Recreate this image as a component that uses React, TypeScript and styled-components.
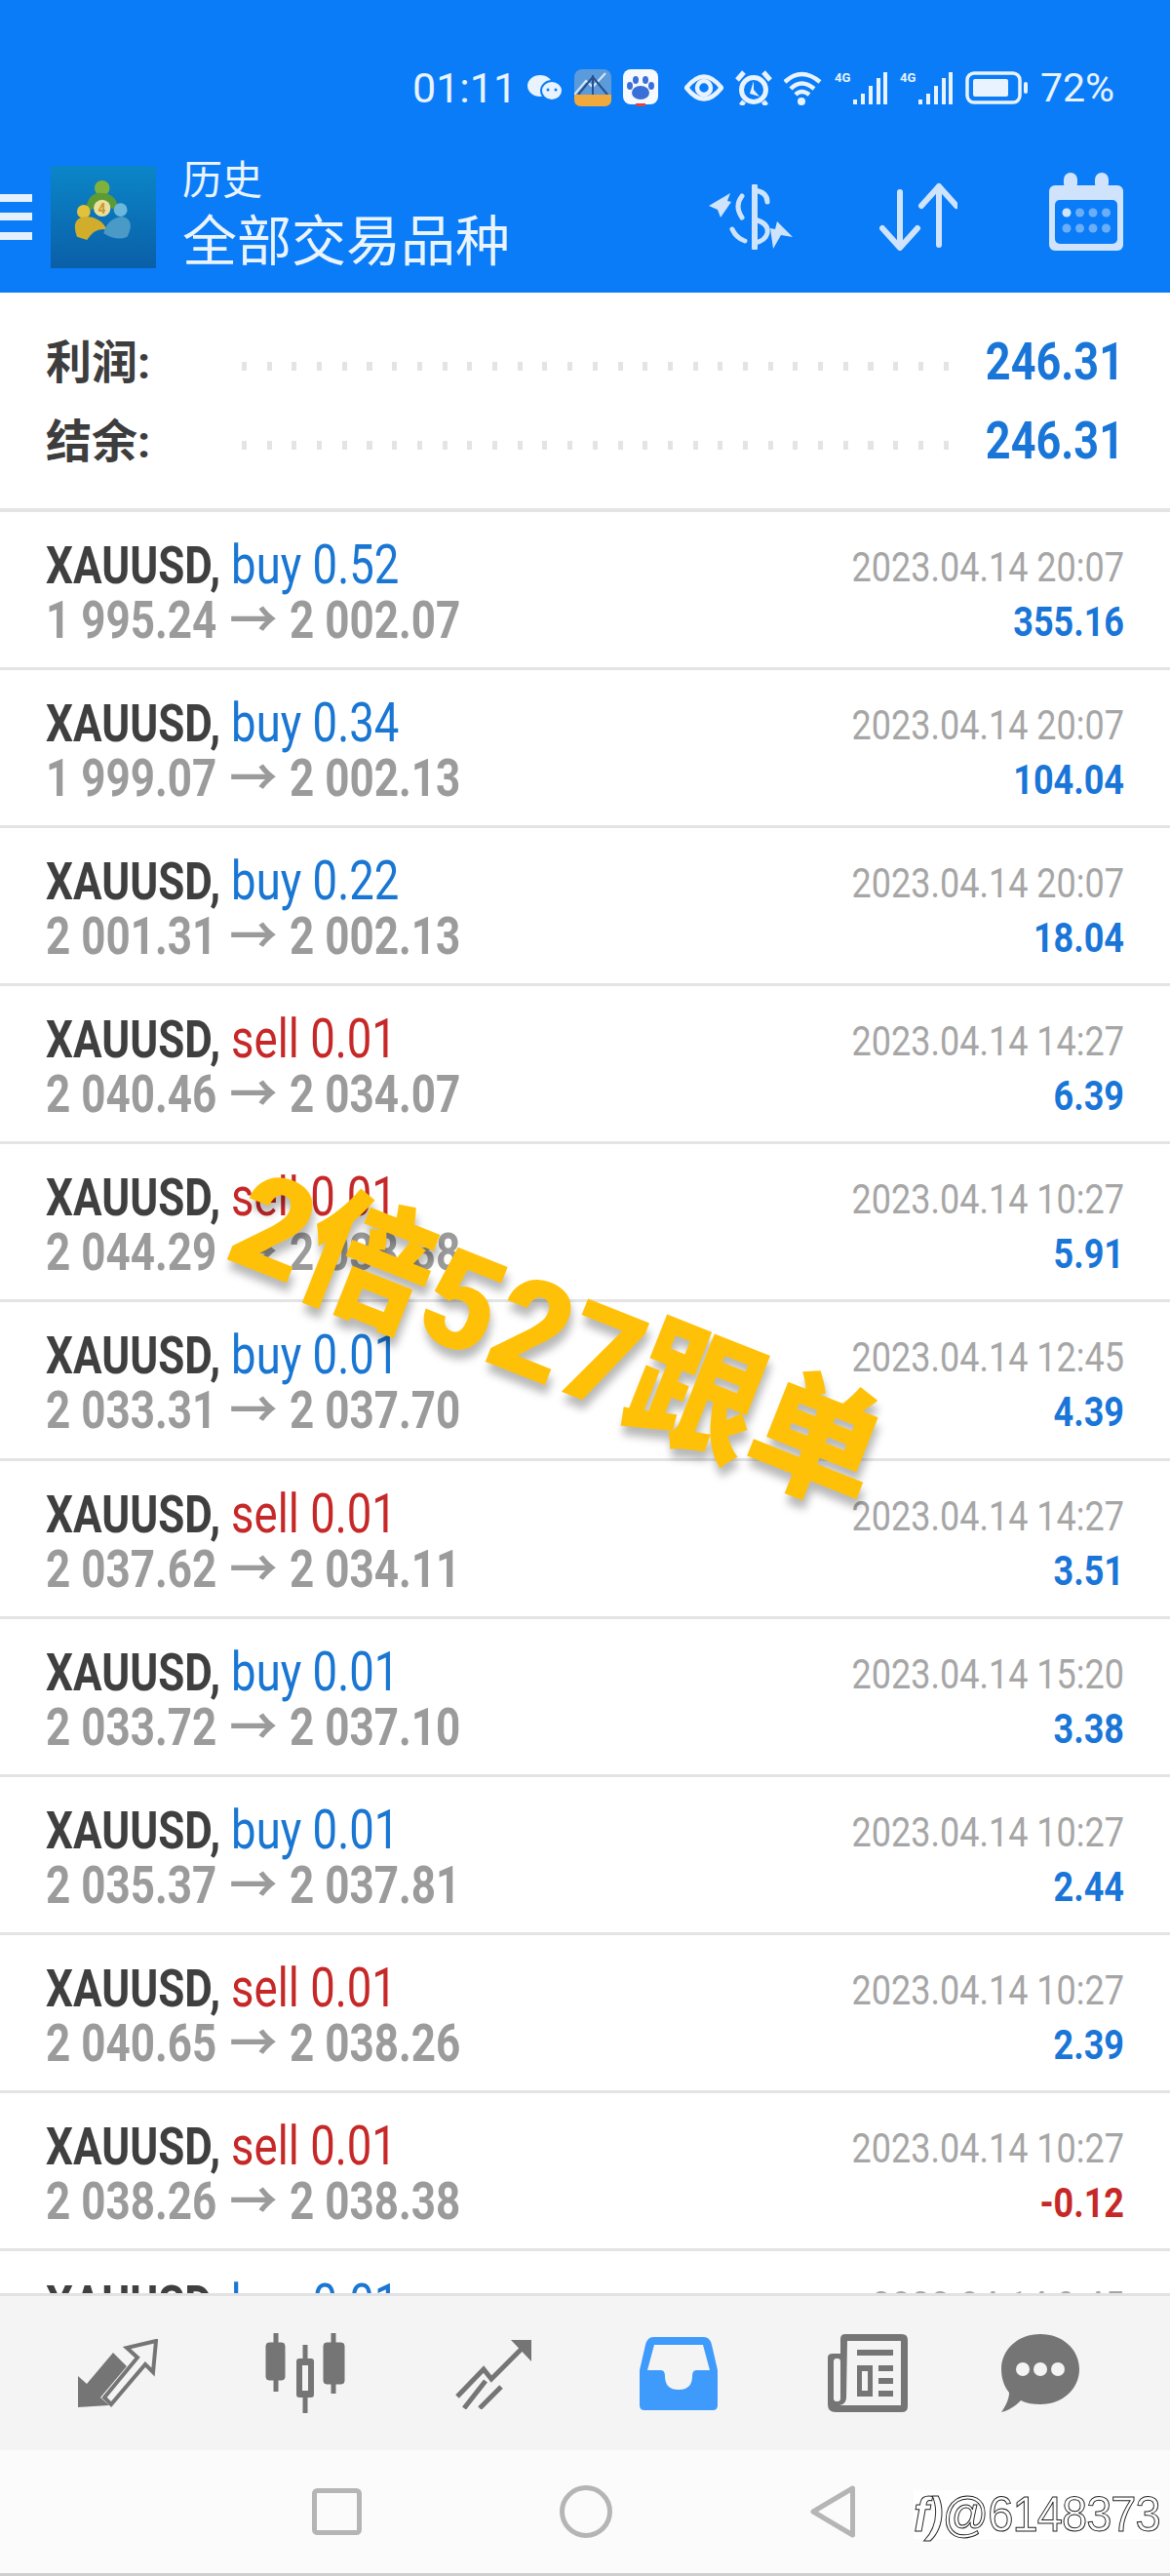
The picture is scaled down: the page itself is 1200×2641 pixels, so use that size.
import styled, { createGlobalStyle } from "styled-components";

const GlobalStyle = createGlobalStyle`
    html, body { margin: 0; padding: 0; background: #fff; }
    body { font-family: Roboto, "Noto Sans CJK SC", sans-serif; }
`

const Page = styled.div`
    position: relative;
    width: 1200px;
    height: 2641px;
    overflow: hidden;
    display: flex;
    flex-direction: column;
    background: #fff;
`

const Header = styled.header`
    flex: none;
    height: 300px;
    background: #0a7cf8;
    color: #eaf4ff;
    display: flex;
    flex-direction: column;
`
const StatusBar = styled.div`
    height: 150px;
    padding: 30px 61px 0 0;
    box-sizing: border-box;
    display: flex;
    align-items: center;
    justify-content: flex-end;
`
const Stretch = styled.span`
    display: inline-block;
    transform: scaleY(1.2);
    white-space: pre;
`
const StatusText = styled.span<{ $w: number }>`
    width: ${p => p.$w}px;
    font-size: ${p => (p.$w > 100 ? 43 : 41)}px;
    line-height: 44px;
    white-space: pre;
    color: #e8f3ff;
`
const StatusIcons = styled.div`
    display: flex;
    align-items: center;
    gap: 12px;
    margin: 0 13px 0 14px;
`
const Toolbar = styled.div`
    flex: 1;
    display: flex;
    align-items: center;
    padding-bottom: 6px;
`
const Burger = styled.div`
    width: 33px;
    height: 47px;
    margin: 0 19px 0 0;
    display: flex;
    flex-direction: column;
    justify-content: space-between;
    span { display: block; height: 8px; background: #e6f1ff; }
`
const Titles = styled.div`
    margin-left: 27px;
    width: 540px;
    display: flex;
    flex-direction: column;
    gap: 6px;
`
const SmallTitle = styled.div`
    font-size: 41px;
    line-height: 46px;
`
const BigTitle = styled.div`
    font-size: 56px;
    line-height: 68px;
`
const ToolIcons = styled.div`
    display: flex;
    align-items: center;
    gap: 89px;
    svg:last-child { margin: -10px 0 0 5px; }
`

const Summary = styled.section`
    flex: none;
    height: 225px;
    padding-top: 30px;
    box-sizing: border-box;
    border-bottom: 4px solid #e4e4e4;
`
const SummaryRow = styled.div`
    height: 81px;
    padding: 0 47px;
    display: flex;
    align-items: center;
`
const SummaryLabel = styled.div`
    width: 201px;
    margin-bottom: 6px;
    font-size: 47px;
    font-weight: 700;
    color: #3d3d3d;
`
const Dots = styled.div`
    width: 735px;
    height: 9px;
    margin-top: 10px;
    background: repeating-linear-gradient(90deg, #e4e4e4 0 5px, transparent 5px 25.7px);
`
const SummaryValue = styled(Stretch)`
    margin-left: auto;
    font-size: 45px;
    font-weight: 700;
    line-height: 44px;
    color: #1976d8;
`

const List = styled.div`
    flex: 1;
    overflow: hidden;
`
const Row = styled.div`
    height: 162.1px;
    box-sizing: border-box;
    padding: 27px 47px 0;
    border-bottom: 3px solid #e4e4e4;
    display: grid;
    grid-template-columns: 1fr auto;
    grid-template-rows: 56px 56px;
    align-items: center;
`
const Symbol = styled(Stretch)`
    font-size: 44px;
    line-height: 44px;
    font-weight: 700;
    color: #3f3f3f;
`
const Side = styled.span<{ $sell: boolean }>`
    font-size: 45.5px;
    font-weight: 400;
    color: ${p => (p.$sell ? "#c62828" : "#1976d2")};
`
const Prices = styled(Stretch)`
    font-size: 44px;
    line-height: 44px;
    font-weight: 700;
    color: #9b9b9b;
`
const Arrow = styled.span`
    display: inline-block;
    margin: 0 4.5px;
    transform: scaleX(1.12);
`
const DateText = styled(Stretch)`
    margin-top: 4px;
    font-size: 36px;
    line-height: 38px;
    text-align: right;
    color: #a6a6a6;
`
const Profit = styled(Stretch)<{ $negative: boolean }>`
    margin-top: 4px;
    font-size: 36px;
    line-height: 38px;
    font-weight: 700;
    text-align: right;
    color: ${p => (p.$negative ? "#c62828" : "#1976d8")};
`

const Stamp = styled.div`
    position: absolute;
    left: 245px;
    top: 1175px;
    font-size: 132px;
    line-height: 140px;
    font-weight: 900;
    white-space: nowrap;
    color: #ffc107;
    transform: rotate(21.6deg) scaleY(1.05);
    transform-origin: 0 50%;
    text-shadow: 5px 8px 8px rgba(0, 0, 0, 0.28);
`

const TabBar = styled.nav`
    flex: none;
    height: 161px;
    background: #f4f4f4;
    border-top: 3px solid #e2e2e2;
    box-sizing: border-box;
    padding-left: 80px;
    display: flex;
    align-items: center;
    gap: 110px;
    svg:nth-child(5) { margin-left: 3px; }
    svg:last-child { margin-left: -14px; }
`
const SystemBar = styled.div`
    flex: none;
    height: 129px;
    background: #fbfbfb;
    border-bottom: 3px solid #cfcfcf;
    box-sizing: border-box;
    padding-left: 320px;
    display: flex;
    align-items: center;
    gap: 203px;
`
const Handle = styled.div`
    position: absolute;
    right: 10px;
    bottom: 38px;
    font-size: 50px;
    line-height: 50px;
    color: #fff;
    font-family: "Liberation Sans", sans-serif;
    -webkit-text-stroke: 1px #222;
    background: #fff;
    letter-spacing: -1px;
    transform: scaleX(0.94);
    transform-origin: 100% 50%;
    em { font-style: italic; font-weight: 700; color: #fff; }
`

const Wechat = () => (
    <svg width="36" height="26" viewBox="0 0 36 26">
        <ellipse cx="13" cy="11" rx="13" ry="11" fill="#e8f3ff" />
        <ellipse cx="25" cy="16" rx="11" ry="10" fill="#e8f3ff" stroke="#0a7cf8" strokeWidth="2" />
        <circle cx="21" cy="15" r="1.5" fill="#0a7cf8" />
        <circle cx="29" cy="15" r="1.5" fill="#0a7cf8" />
    </svg>
)
const AppBadge = () => (
    <svg width="38" height="38" viewBox="0 0 38 38">
        <rect width="38" height="38" rx="8" fill="#5b9bdc" />
        <path d="M0 26 L12 12 L19 18 L32 4" stroke="#d6e8fa" strokeWidth="2" fill="none" />
        <path d="M19 6 L19 26 M19 8 L4 26 M19 8 L34 26" stroke="#2a4f8f" strokeWidth="2" fill="none" />
        <path d="M0 26 H38 V31 Q38 38 31 38 H7 Q0 38 0 31 Z" fill="#efa93c" />
    </svg>
)
const BaiduBadge = () => (
    <svg width="36" height="38" viewBox="0 0 36 38">
        <rect width="36" height="36" rx="8" fill="#f6faff" />
        <ellipse cx="18" cy="24" rx="9" ry="7" fill="#3b6fd8" />
        <ellipse cx="13" cy="11" rx="3" ry="4" fill="#3b6fd8" />
        <ellipse cx="23" cy="11" rx="3" ry="4" fill="#3b6fd8" />
        <ellipse cx="7" cy="17" rx="3" ry="4" fill="#3b6fd8" />
        <ellipse cx="29" cy="17" rx="3" ry="4" fill="#3b6fd8" />
        <rect x="13" y="35" width="10" height="3" fill="#d8434a" />
    </svg>
)
const Eye = () => (
    <svg width="40" height="28" viewBox="0 0 40 28" style={{ marginLeft: 15 }}>
        <path d="M2 14 Q20 -9 38 14 Q20 37 2 14 Z" fill="none" stroke="#e8f3ff" strokeWidth="4.5" />
        <circle cx="20" cy="14" r="7" fill="none" stroke="#e8f3ff" strokeWidth="4.5" />
    </svg>
)
const Alarm = () => (
    <svg width="38" height="36" viewBox="0 0 38 36">
        <circle cx="19" cy="20" r="12.5" fill="none" stroke="#e8f3ff" strokeWidth="5" />
        <path d="M19 11 V20 L25 27 L15 24 Z" fill="#e8f3ff" />
        <path d="M2 10 L9 2 M36 10 L29 2 M9 32 L6 36 M29 32 L32 36" stroke="#e8f3ff" strokeWidth="5" />
    </svg>
)
const Wifi = () => (
    <svg width="40" height="36" viewBox="0 0 40 36" fill="none" stroke="#e8f3ff" strokeWidth="4.5">
        <path d="M1 12 Q18 -4 37 12" />
        <path d="M7 19 Q18 8 31 19" />
        <path d="M12 25 Q18 19 26 25" />
        <circle cx="18" cy="32" r="4" fill="#e8f3ff" stroke="none" />
    </svg>
)
const Signal = () => (
    <svg width="55" height="36" viewBox="0 0 55 36" fill="#e8f3ff">
        <text x="0" y="12" fontSize="13" fontWeight="700" fontFamily="Roboto, sans-serif">4G</text>
        <rect x="19" y="30" width="4" height="5" />
        <rect x="27" y="24" width="4" height="11" />
        <rect x="35" y="16" width="4" height="19" />
        <rect x="43" y="8" width="4" height="27" />
        <rect x="50" y="2" width="4" height="33" />
    </svg>
)
const Battery = () => (
    <svg width="64" height="34" viewBox="0 0 64 34">
        <rect x="2" y="2" width="54" height="30" rx="7" fill="none" stroke="#e8f3ff" strokeWidth="3.5" />
        <rect x="8" y="8" width="36" height="18" rx="2" fill="#e8f3ff" />
        <rect x="60" y="11" width="4" height="12" rx="2" fill="#e8f3ff" />
    </svg>
)

const Mt4Logo = () => (
    <svg width="108" height="105" viewBox="0 0 108 105">
        <defs>
            <linearGradient id="mtBg" x1="0" y1="0" x2="0" y2="1">
                <stop offset="0" stopColor="#0b86c8" />
                <stop offset="1" stopColor="#0a5fa8" />
            </linearGradient>
        </defs>
        <rect width="108" height="105" fill="url(#mtBg)" />
        <g transform="translate(8 -3) scale(0.86)">
            <circle cx="52" cy="30" r="9" fill="#7fb23c" />
            <path d="M32 60 Q34 34 52 36 Q70 36 72 58 Q52 46 32 60 Z" fill="#5c9a35" />
            <circle cx="30" cy="58" r="8" fill="#e2c23c" />
            <path d="M22 88 Q14 66 32 64 Q50 64 58 80 Q44 76 34 92 Z" fill="#d2ad2c" />
            <circle cx="74" cy="56" r="8" fill="#6cb8dc" />
            <path d="M54 84 Q58 66 76 64 Q92 68 82 88 Q70 94 54 84 Z" fill="#4a9ac8" />
            <circle cx="52" cy="54" r="10" fill="#eadf9c" />
            <text x="47" y="60" fontSize="16" fontWeight="700" fill="#c79a2a" fontFamily="Roboto, sans-serif">4</text>
        </g>
    </svg>
)

const light = "#cfe4fc"

const DollarSwap = () => (
    <svg width="86" height="67" viewBox="0 0 86 67" fill="none" stroke={light} strokeWidth="5" strokeLinecap="round">
        <path d="M47 2 V65" strokeWidth="6" />
        <path d="M47 6 Q60 8 60 18" />
        <path d="M34 12 Q26 22 34 34" />
        <path d="M24 46 Q28 55 37 58" />
        <path d="M47 36 Q62 40 60 50 Q58 58 47 60" />
        <path d="M0 22 L22 9 L19 17 L23 18 L12 34 L9 26 Z" fill={light} stroke="none" />
        <path d="M86 54 L70 38 L68 46 L63 45 L66 66 L74 52 Z" fill={light} stroke="none" />
    </svg>
)
const SortArrows = () => (
    <svg width="80" height="70" viewBox="0 0 80 70" fill="none" stroke={light} strokeWidth="6" strokeLinecap="round" strokeLinejoin="round">
        <path d="M21 10 V66 M3 47 L21 67 L39 47" />
        <path d="M61 64 V4 M43 24 L61 4 L79 24" />
    </svg>
)
const CalendarIcon = () => (
    <svg width="76" height="80" viewBox="0 0 76 80">
        <rect x="0" y="13" width="76" height="67" rx="6" fill={light} />
        <rect x="6" y="28" width="64" height="45" rx="5" fill="#0a7cf8" />
        <rect x="15" y="0" width="14" height="18" rx="7" fill={light} />
        <rect x="47" y="0" width="14" height="18" rx="7" fill={light} />
        {[0, 1, 2, 3].map(i => (
            <circle key={i} cx={18 + i * 13.5} cy="41" r="4.5" fill={i === 0 ? light : "#6aaefa"} />
        ))}
        {[0, 1, 2, 3].map(i => (
            <circle key={i} cx={18 + i * 13.5} cy="57" r="4.5" fill="#6aaefa" />
        ))}
    </svg>
)

const gray = "#757575"

const TradeIcon = () => (
    <svg width="82" height="70" viewBox="0 0 82 70">
        <path d="M0 70 L0 38 L9 46 L36 14 L50 28 L23 60 L32 68 Z" fill={gray} />
        <path d="M80 2 L77 34 L69 26 L34 67 L27 60 L61 19 L50 9 Z" fill="#f4f4f4" stroke={gray} strokeWidth="4" />
    </svg>
)
const CandlesIcon = () => (
    <svg width="84" height="82" viewBox="0 0 84 82" fill={gray} stroke={gray}>
        <path d="M11 0 V60" strokeWidth="5" />
        <rect x="1" y="10" width="19" height="38" rx="3" />
        <path d="M70 0 V62" strokeWidth="5" />
        <rect x="60" y="10" width="21" height="42" rx="3" />
        <path d="M41 12 V82" strokeWidth="5" />
        <rect x="32" y="26" width="18" height="40" rx="3" strokeWidth="0" />
        <rect x="38" y="33" width="6" height="26" fill="#f4f4f4" stroke="none" />
    </svg>
)
const ChartIcon = () => (
    <svg width="80" height="73" viewBox="0 0 80 73" fill="none" stroke={gray} strokeWidth="5">
        <path d="M70 10 L38 42 L30 32 L3 60" />
        <path d="M58 2 H79 V24 Z" fill={gray} stroke="none" />
        <path d="M10 72 L32 44 M26 72 L48 50" />
    </svg>
)
const InboxIcon = () => (
    <svg width="80" height="75" viewBox="0 0 80 75">
        <path d="M14 0 H66 Q72 0 74 8 L80 34 V70 Q80 75 75 75 H5 Q0 75 0 70 V34 L6 8 Q8 0 14 0 Z" fill="#3f9bfb" />
        <path d="M15 8 H65 L72 34 H58 Q54 34 54 40 Q54 54 40 54 Q26 54 26 40 Q26 34 22 34 H8 Z" fill="#f4f4f4" />
    </svg>
)
const NewsIcon = () => (
    <svg width="82" height="80" viewBox="0 0 82 80">
        <path d="M18 0 H76 Q82 0 82 6 V74 Q82 80 76 80 H8 Q0 80 0 72 V24 Q0 20 5 20 H13 V5 Q13 0 18 0 Z" fill={gray} />
        <rect x="6" y="25" width="7" height="44" rx="3" fill="#f4f4f4" />
        <path d="M20 7 H75 V73 H12 Q18 72 19 66 Z" fill="#f4f4f4" />
        <rect x="30" y="16" width="37" height="6" fill={gray} />
        <rect x="30" y="32" width="16" height="32" fill={gray} />
        <rect x="35" y="38" width="6" height="20" fill="#f4f4f4" />
        <rect x="52" y="32" width="15" height="6" fill={gray} />
        <rect x="52" y="45" width="15" height="6" fill={gray} />
        <rect x="52" y="58" width="15" height="6" fill={gray} />
    </svg>
)
const ChatIcon = () => (
    <svg width="80" height="80" viewBox="0 0 80 80">
        <path d="M40 0 C63 0 80 16 80 36 C80 56 63 72 40 72 C33 72 26 71 20 68 C14 74 8 78 0 80 C5 73 8 66 8 60 C3 54 0 45 0 36 C0 16 17 0 40 0 Z" fill={gray} />
        <circle cx="22" cy="36" r="7" fill="#f4f4f4" />
        <circle cx="40" cy="36" r="7" fill="#f4f4f4" />
        <circle cx="58" cy="36" r="7" fill="#f4f4f4" />
    </svg>
)

const sysGray = "#b5b5b5"

type Trade = { side: "buy" | "sell", lot: string, open: string, close: string, time: string, profit: string }

const trades: Trade[] = [
    { side: "buy", lot: "0.52", open: "1 995.24", close: "2 002.07", time: "20:07", profit: "355.16" },
    { side: "buy", lot: "0.34", open: "1 999.07", close: "2 002.13", time: "20:07", profit: "104.04" },
    { side: "buy", lot: "0.22", open: "2 001.31", close: "2 002.13", time: "20:07", profit: "18.04" },
    { side: "sell", lot: "0.01", open: "2 040.46", close: "2 034.07", time: "14:27", profit: "6.39" },
    { side: "sell", lot: "0.01", open: "2 044.29", close: "2 038.38", time: "10:27", profit: "5.91" },
    { side: "buy", lot: "0.01", open: "2 033.31", close: "2 037.70", time: "12:45", profit: "4.39" },
    { side: "sell", lot: "0.01", open: "2 037.62", close: "2 034.11", time: "14:27", profit: "3.51" },
    { side: "buy", lot: "0.01", open: "2 033.72", close: "2 037.10", time: "15:20", profit: "3.38" },
    { side: "buy", lot: "0.01", open: "2 035.37", close: "2 037.81", time: "10:27", profit: "2.44" },
    { side: "sell", lot: "0.01", open: "2 040.65", close: "2 038.26", time: "10:27", profit: "2.39" },
    { side: "sell", lot: "0.01", open: "2 038.26", close: "2 038.38", time: "10:27", profit: "-0.12" },
    { side: "buy", lot: "0.01", open: "2 033.00", close: "2 037.00", time: "9:45", profit: "2.00" },
]

export default function App() {
    return (
        <Page>
            <GlobalStyle />
            <Header>
                <StatusBar>
                    <StatusText $w={104}>01:11</StatusText>
                    <StatusIcons>
                        <Wechat />
                        <AppBadge />
                        <BaiduBadge />
                        <Eye />
                        <Alarm />
                        <Wifi />
                        <Signal />
                        <Signal />
                        <Battery />
                    </StatusIcons>
                    <StatusText $w={72}>72%</StatusText>
                </StatusBar>
                <Toolbar>
                    <Burger><span /><span /><span /></Burger>
                    <Mt4Logo />
                    <Titles>
                        <SmallTitle>历史</SmallTitle>
                        <BigTitle>全部交易品种</BigTitle>
                    </Titles>
                    <ToolIcons>
                        <DollarSwap />
                        <SortArrows />
                        <CalendarIcon />
                    </ToolIcons>
                </Toolbar>
            </Header>

            <Summary>
                <SummaryRow>
                    <SummaryLabel>利润:</SummaryLabel>
                    <Dots />
                    <SummaryValue>246.31</SummaryValue>
                </SummaryRow>
                <SummaryRow>
                    <SummaryLabel>结余:</SummaryLabel>
                    <Dots />
                    <SummaryValue>246.31</SummaryValue>
                </SummaryRow>
            </Summary>

            <List>
                {trades.map((t, i) => (
                    <Row key={i}>
                        <Symbol>XAUUSD, <Side $sell={t.side === "sell"}>{t.side} {t.lot}</Side></Symbol>
                        <DateText>2023.04.14 {t.time}</DateText>
                        <Prices>{t.open} <Arrow>→</Arrow> {t.close}</Prices>
                        <Profit $negative={t.profit.startsWith("-")}>{t.profit}</Profit>
                    </Row>
                ))}
            </List>

            <TabBar>
                <TradeIcon />
                <CandlesIcon />
                <ChartIcon />
                <InboxIcon />
                <NewsIcon />
                <ChatIcon />
            </TabBar>
            <SystemBar>
                <svg width="51" height="48" viewBox="0 0 51 48">
                    <rect x="2.5" y="2.5" width="46" height="43" rx="3" fill="none" stroke={sysGray} strokeWidth="5" />
                </svg>
                <svg width="54" height="54" viewBox="0 0 54 54">
                    <circle cx="27" cy="27" r="24.5" fill="none" stroke={sysGray} strokeWidth="5" />
                </svg>
                <svg width="46" height="54" viewBox="0 0 46 54">
                    <path d="M43.5 3 V51 L3 27 Z" fill="none" stroke={sysGray} strokeWidth="5" strokeLinejoin="round" />
                </svg>
            </SystemBar>

            <Stamp>2倍527跟单</Stamp>
            <Handle><em>f)</em>@6148373</Handle>
        </Page>
    )
}
